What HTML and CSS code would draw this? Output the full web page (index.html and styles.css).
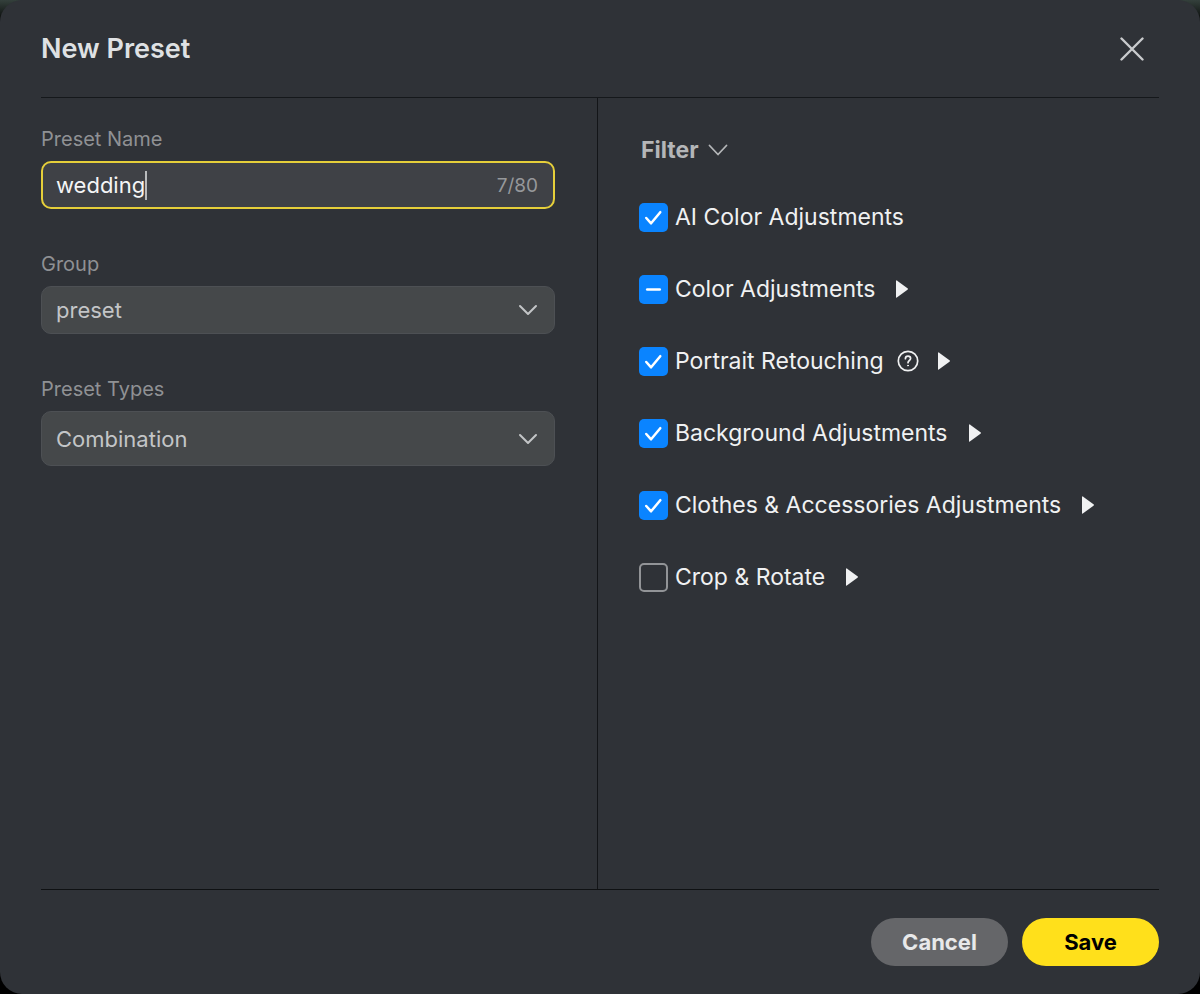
FILE: index.html
```html
<!DOCTYPE html>
<html lang="en">
<head>
<meta charset="utf-8">
<meta name="viewport" content="width=device-width, initial-scale=1">
<title>New Preset</title>
<link rel="stylesheet" href="styles.css">
</head>
<body>
<form class="dialog" role="dialog" aria-labelledby="dialog-title">
  <header class="header">
    <h1 class="title" id="dialog-title">New Preset</h1>
    <button class="icon-button close" type="button" aria-label="Close">
      <svg width="24" height="24" viewBox="0 0 24 24" fill="none" stroke="currentColor" stroke-width="2.4" stroke-linecap="round"><path d="M1.5 1.5 22.5 22.5M22.5 1.5 1.5 22.5"/></svg>
    </button>
  </header>

  <main class="content">
    <section class="fields">
      <div class="field">
        <label class="label" for="preset-name">Preset Name</label>
        <div class="control text-control">
          <input class="text-input" id="preset-name" type="text" maxlength="80" size="7" value="wedding">
          <span class="caret"></span>
          <span class="counter">7/80</span>
        </div>
      </div>
      <div class="field">
        <label class="label" for="group">Group</label>
        <div class="control select-control">
          <select class="select" id="group"><option>preset</option></select>
          <svg class="chevron" width="20" height="12" viewBox="0 0 20 12" fill="none" stroke="currentColor" stroke-width="2" stroke-linecap="round" stroke-linejoin="round"><path d="M2 2l8 8 8-8"/></svg>
        </div>
      </div>
      <div class="field">
        <label class="label" for="types">Preset Types</label>
        <div class="control select-control tall">
          <select class="select" id="types"><option>Combination</option></select>
          <svg class="chevron" width="20" height="12" viewBox="0 0 20 12" fill="none" stroke="currentColor" stroke-width="2" stroke-linecap="round" stroke-linejoin="round"><path d="M2 2l8 8 8-8"/></svg>
        </div>
      </div>
    </section>

    <section class="filters">
      <button class="filter-button" type="button">Filter
        <svg width="20" height="12" viewBox="0 0 20 12" fill="none" stroke="currentColor" stroke-width="1.8" stroke-linecap="round" stroke-linejoin="round"><path d="M1.5 1.5l8.5 9 8.5-9"/></svg>
      </button>
      <ul class="options">
        <li class="option">
          <label class="option-label"><span class="check"><input class="box" type="checkbox" checked><svg class="mark" viewBox="0 0 30 30"><path d="M7.5 15.5l5 5.5 9.5-11.5"/></svg></span>AI Color Adjustments</label>
        </li>
        <li class="option">
          <label class="option-label"><span class="check"><input class="box" type="checkbox" checked><svg class="mark" viewBox="0 0 30 30"><path d="M8.5 15h13"/></svg></span>Color Adjustments</label>
          <button class="icon-button" type="button" aria-label="Expand Color Adjustments"><svg width="12" height="18" viewBox="0 0 12 18" fill="currentColor"><path d="M0 .8Q0 0 .8.5L11.5 8.3Q12.4 9 11.5 9.7L.8 17.5Q0 18 0 17.2Z"/></svg></button>
        </li>
        <li class="option">
          <label class="option-label"><span class="check"><input class="box" type="checkbox" checked><svg class="mark" viewBox="0 0 30 30"><path d="M7.5 15.5l5 5.5 9.5-11.5"/></svg></span>Portrait Retouching</label>
          <button class="icon-button help" type="button" aria-label="Help"><svg width="22" height="22" viewBox="0 0 22 22" fill="none" stroke="currentColor" stroke-width="1.7" stroke-linecap="round"><circle cx="11" cy="11" r="9.7"/><path d="M8.4 8.7C8.4 7 9.5 6.1 11 6.1s2.6.9 2.6 2.4c0 2-2.6 2-2.6 4.2"/><circle cx="11" cy="15.6" r=".5" fill="currentColor" stroke-width="1"/></svg></button>
          <button class="icon-button" type="button" aria-label="Expand Portrait Retouching"><svg width="12" height="18" viewBox="0 0 12 18" fill="currentColor"><path d="M0 .8Q0 0 .8.5L11.5 8.3Q12.4 9 11.5 9.7L.8 17.5Q0 18 0 17.2Z"/></svg></button>
        </li>
        <li class="option">
          <label class="option-label"><span class="check"><input class="box" type="checkbox" checked><svg class="mark" viewBox="0 0 30 30"><path d="M7.5 15.5l5 5.5 9.5-11.5"/></svg></span>Background Adjustments</label>
          <button class="icon-button" type="button" aria-label="Expand Background Adjustments"><svg width="12" height="18" viewBox="0 0 12 18" fill="currentColor"><path d="M0 .8Q0 0 .8.5L11.5 8.3Q12.4 9 11.5 9.7L.8 17.5Q0 18 0 17.2Z"/></svg></button>
        </li>
        <li class="option">
          <label class="option-label"><span class="check"><input class="box" type="checkbox" checked><svg class="mark" viewBox="0 0 30 30"><path d="M7.5 15.5l5 5.5 9.5-11.5"/></svg></span>Clothes &amp; Accessories Adjustments</label>
          <button class="icon-button" type="button" aria-label="Expand Clothes and Accessories Adjustments"><svg width="12" height="18" viewBox="0 0 12 18" fill="currentColor"><path d="M0 .8Q0 0 .8.5L11.5 8.3Q12.4 9 11.5 9.7L.8 17.5Q0 18 0 17.2Z"/></svg></button>
        </li>
        <li class="option">
          <label class="option-label"><span class="check"><input class="box" type="checkbox"></span>Crop &amp; Rotate</label>
          <button class="icon-button" type="button" aria-label="Expand Crop and Rotate"><svg width="12" height="18" viewBox="0 0 12 18" fill="currentColor"><path d="M0 .8Q0 0 .8.5L11.5 8.3Q12.4 9 11.5 9.7L.8 17.5Q0 18 0 17.2Z"/></svg></button>
        </li>
      </ul>
    </section>
  </main>

  <footer class="footer">
    <button class="button cancel" type="button">Cancel</button>
    <button class="button save" type="submit">Save</button>
  </footer>
</form>
</body>
</html>
```

FILE: styles.css
```css
*, *::before, *::after { box-sizing: border-box; }

body {
  margin: 0;
  background: linear-gradient(#34403c, #000 24px);
  font-family: Inter, "Liberation Sans", sans-serif;
  color: #f0f1f2;
}

button, input, select { font: inherit; color: inherit; }
button { cursor: pointer; }
svg { display: block; }

.dialog {
  display: flex;
  flex-direction: column;
  min-height: 100vh;
  padding: 0 41px;
  border-radius: 22px;
  background: #2f3237;
}

.header {
  display: flex;
  align-items: center;
  justify-content: space-between;
  padding: 32px 15px 32px 0;
  border-bottom: 1px solid #15181b;
}

.title {
  margin: 0;
  font-size: 27px;
  font-weight: 600;
  line-height: 33px;
  color: #dfe1e3;
}

.icon-button {
  padding: 0;
  border: 0;
  background: none;
}

.close { color: #c9cbcd; }

.content {
  display: grid;
  flex: 1;
  grid-template-columns: 557fr 561fr;
}

.fields {
  display: flex;
  flex-direction: column;
  gap: 43px;
  padding: 29px 42px 0 0;
  border-right: 1px solid #131518;
}

.field {
  display: flex;
  flex-direction: column;
  gap: 10px;
}

.label {
  font-size: 20px;
  line-height: 24px;
  color: #8f9194;
}

.control {
  height: 48px;
  border: 1px solid #4d5054;
  border-radius: 10px;
  background: #45484a;
  font-size: 22px;
  color: #c3c5c7;
}

.text-control {
  display: flex;
  align-items: center;
  padding: 0 15px 0 13px;
  border: 2px solid #e6cf3a;
  background: #3f4146;
}

.text-input {
  field-sizing: content;
  min-width: 0;
  padding: 0;
  border: 0;
  outline: 0;
  background: none;
  color: #f4f5f6;
}

.caret {
  width: 2px;
  height: 29px;
  background: #b9bbbd;
}

.counter {
  margin-left: auto;
  font-size: 19px;
  color: #96989b;
}

.select-control {
  display: grid;
  align-items: center;
}

.select, .chevron { grid-area: 1 / 1; }

.select {
  width: 100%;
  height: 100%;
  padding: 0 48px 0 14px;
  border: 0;
  border-radius: 10px;
  appearance: none;
  background: none;
}

.chevron {
  justify-self: end;
  margin-right: 16px;
  pointer-events: none;
}

.tall { height: 55px; }

.filters { padding: 38px 0 0 41px; }

.filter-button {
  display: flex;
  align-items: center;
  gap: 9px;
  padding: 0 0 0 2px;
  border: 0;
  background: none;
  font-size: 23px;
  font-weight: 700;
  line-height: 28px;
  color: #b4b6b8;
}

.options {
  display: flex;
  flex-direction: column;
  gap: 42px;
  margin: 0;
  padding: 38px 0 0;
  list-style: none;
}

.option {
  display: flex;
  align-items: center;
  gap: 21px;
}

.option-label {
  display: flex;
  align-items: center;
  gap: 7px;
  font-size: 23px;
  line-height: 30px;
}

.help { margin: 0 -2px 0 -8px; }

.check {
  display: grid;
  width: 29px;
  height: 29px;
}

.box, .mark {
  grid-area: 1 / 1;
  width: 29px;
  height: 29px;
}

.box {
  margin: 0;
  border: 2px solid #929497;
  border-radius: 5px;
  appearance: none;
}

.box:checked {
  border: 0;
  background: #0a84ff;
}

.mark {
  fill: none;
  stroke: #fff;
  stroke-width: 2.6;
  stroke-linecap: round;
  stroke-linejoin: round;
  pointer-events: none;
}

.footer {
  display: flex;
  align-items: flex-start;
  justify-content: flex-end;
  gap: 14px;
  padding: 28px 0;
  border-top: 1px solid #0f1113;
}

.button {
  width: 137px;
  height: 48px;
  padding: 0;
  border: 0;
  border-radius: 24px;
  font-size: 22px;
  font-weight: 700;
}

.cancel {
  background: #656669;
  color: #e8e9ea;
}

.save {
  background: #ffe01b;
  color: #000;
}
```
